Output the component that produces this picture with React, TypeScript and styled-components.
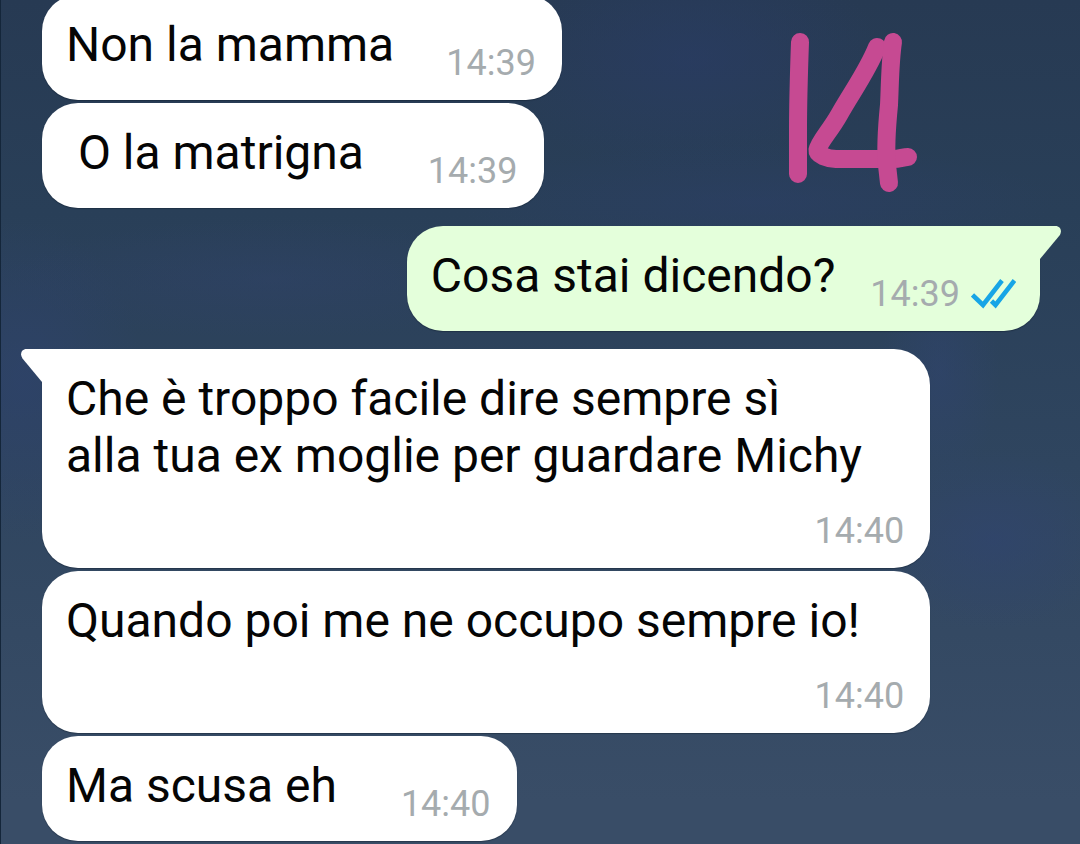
import React from 'react';
import styled, { createGlobalStyle, css } from 'styled-components';

const GlobalStyle = createGlobalStyle`
  body {
    margin: 0;
    background: #2c415c;
    font-family: Roboto, 'Liberation Sans', sans-serif;
  }
`;

type Side = 'in' | 'out';

interface Message {
  text: string;
  time: string;
  read?: boolean;
  wide?: boolean;
}

interface Group {
  side: Side;
  tail: boolean;
  messages: Message[];
}

const groups: Group[] = [
  {
    side: 'in',
    tail: false,
    messages: [
      { text: 'Non la mamma', time: '14:39' },
      { text: ' O la matrigna ', time: '14:39' },
    ],
  },
  {
    side: 'out',
    tail: true,
    messages: [{ text: 'Cosa stai dicendo?', time: '14:39', read: true }],
  },
  {
    side: 'in',
    tail: true,
    messages: [
      {
        text: 'Che è troppo facile dire sempre sì\nalla tua ex moglie per guardare Michy',
        time: '14:40',
        wide: true,
      },
      { text: 'Quando poi me ne occupo sempre io!', time: '14:40', wide: true },
      { text: 'Ma scusa eh ', time: '14:40' },
    ],
  },
];

const Chat = styled.main`
  position: relative;
  box-sizing: border-box;
  min-height: 100vh;
  overflow: hidden;
  border-left: 1px solid #14263a;
  background:
    radial-gradient(ellipse 190px 120px at 64% 7%, rgba(42, 60, 102, 0.6), transparent),
    radial-gradient(ellipse 300px 60px at 70% 24%, rgba(44, 62, 104, 0.5), transparent),
    radial-gradient(ellipse 120px 90px at 92% 64%, rgba(48, 68, 112, 0.6), transparent),
    radial-gradient(ellipse 60px 120px at 87% 44%, rgba(48, 68, 112, 0.5), transparent),
    radial-gradient(ellipse 120px 160px at 2% 45%, rgba(46, 66, 110, 0.6), transparent),
    radial-gradient(ellipse 260px 60px at 25% 33%, rgba(48, 66, 104, 0.5), transparent),
    linear-gradient(#273a53 0%, #293f58 25%, #2f455f 55%, #394d67 95%);
`;

const Thread = styled.div`
  display: flex;
  flex-direction: column;
  gap: 18px;
  margin-top: -5px;
  padding: 0 40px 3px 41px;
`;

const MessageGroup = styled.section<{ $side: Side }>`
  display: flex;
  flex-direction: column;
  align-items: ${({ $side }) => ($side === 'out' ? 'flex-end' : 'flex-start')};
  gap: 3px;
`;

const Bubble = styled.article<{ $side: Side; $wide?: boolean; $tail: boolean }>`
  position: relative;
  box-sizing: border-box;
  display: flex;
  align-items: flex-end;
  gap: ${({ $side }) => ($side === 'out' ? 35 : 52)}px;
  max-width: 89%;
  padding: 21px ${({ $side }) => ($side === 'out' ? 24 : 26)}px 16px 24px;
  border-radius: 36px;
  background: ${({ $side }) => ($side === 'out' ? '#e4ffdb' : '#ffffff')};
  box-shadow: 0 1px 1px rgba(12, 24, 40, 0.4);

  ${({ $wide }) =>
    $wide &&
    css`
      width: 89%;
      flex-direction: column;
      gap: 15px;
    `}

  ${({ $tail, $side }) =>
    $tail &&
    ($side === 'out'
      ? css`
          border-top-right-radius: 0;
        `
      : css`
          border-top-left-radius: 0;
        `)}
`;

const Text = styled.p<{ $wide?: boolean }>`
  flex: none;
  align-self: ${({ $wide }) => ($wide ? 'flex-start' : 'auto')};
  max-width: 100%;
  margin: 0;
  padding-bottom: 11px;
  color: #050505;
  font-size: 48px;
  line-height: 57px;
  white-space: pre-wrap;
`;

const Meta = styled.footer`
  display: flex;
  flex: none;
  align-items: center;
  gap: 11px;
  color: #a5abae;
  font-size: 36px;
  line-height: 42px;
`;

const Tail = styled.svg<{ $side: Side }>`
  position: absolute;
  top: 0;
  ${({ $side }) => ($side === 'out' ? 'left: 100%;' : 'right: 100%;')}
  ${({ $side }) => $side === 'in' && 'transform: scaleX(-1);'}
  fill: ${({ $side }) => ($side === 'out' ? '#e4ffdb' : '#ffffff')};
`;

const Drawing = styled.svg`
  position: absolute;
  top: 30px;
  right: 160px;
  fill: none;
  stroke: #c64a92;
  stroke-width: 18;
  stroke-linecap: round;
  stroke-linejoin: round;
`;

const ReadTicks = () => (
  <svg width="45" height="30" viewBox="0 0 45 30" fill="none" stroke="#17a5e6" strokeWidth="4.600" role="img" aria-label="Letto">
    <path d="M1.500 16L12 26L31 1.500M20.500 22L24.500 26L43.500 1.500" />
  </svg>
);

const MessageBubble = ({ message, side, tail }: { message: Message; side: Side; tail: boolean }) => (
  <Bubble $side={side} $wide={message.wide} $tail={tail}>
    {tail && (
      <Tail $side={side} width="21" height="34" viewBox="0 0 21 34" aria-hidden="true">
        <path d="M0 0H15.500C20.500 0 22.500 5 19.500 9.500L0 33Z" />
      </Tail>
    )}
    <Text $wide={message.wide}>{message.text}</Text>
    <Meta>
      <time>{message.time}</time>
      {message.read && <ReadTicks />}
    </Meta>
  </Bubble>
);

export default function App() {
  return (
    <>
      <GlobalStyle />
      <Chat>
        <Thread>
          {groups.map((group, g) => (
            <MessageGroup key={g} $side={group.side}>
              {group.messages.map((message, m) => (
                <MessageBubble key={m} message={message} side={group.side} tail={group.tail && m === 0} />
              ))}
            </MessageGroup>
          ))}
        </Thread>
        <Drawing width="140" height="170" viewBox="780 30 140 170" role="img" aria-label="14">
          <path d="M800 42C799 70 798 100 798 130V174" />
          <path d="M877 47C868 70 852 92 839 115C830 131 819 142 817.500 150C817 155 827 158.500 836 159H893C900 159 903 157 908 157" />
          <path d="M893 42C890 62 890 85 889 105C886 135 886 155 887 165L889 183" />
        </Drawing>
      </Chat>
    </>
  );
}
